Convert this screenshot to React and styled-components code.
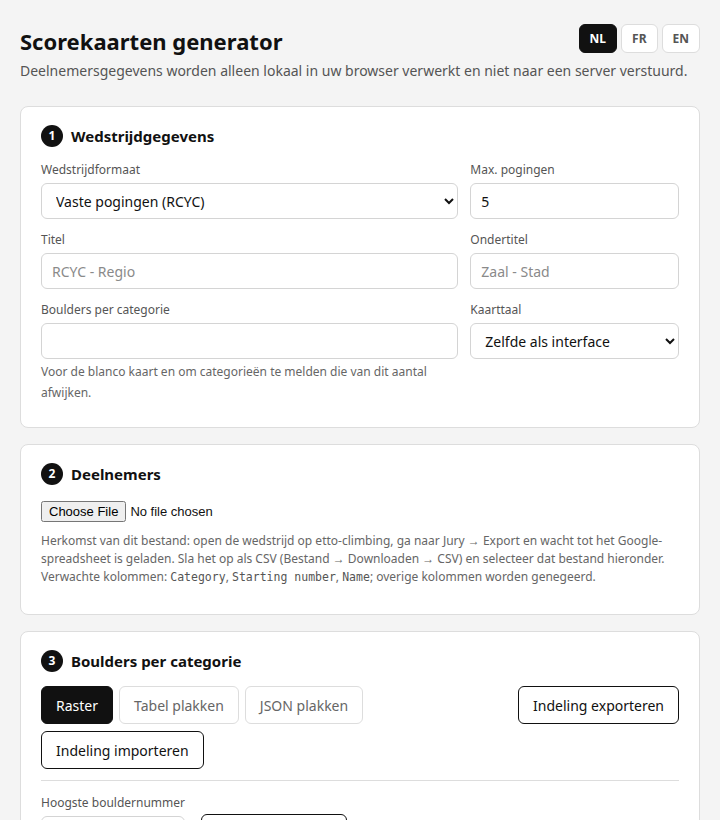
import React, { useState } from "react";
import styled, { createGlobalStyle } from "styled-components";

const GlobalStyle = createGlobalStyle`
  * { box-sizing: border-box; }
  body {
    margin: 0;
    background: #f4f4f4;
    color: #111;
    font-family: "Noto Sans", "Open Sans", sans-serif;
  }
`;

const Page = styled.div`
  padding: 24px 20px 40px;
`;

const Header = styled.header`
  display: flex;
  justify-content: space-between;
  align-items: flex-start;
`;

const Title = styled.h1`
  margin: 0;
  font-size: 22px;
  line-height: 34px;
  font-weight: 700;
`;

const LangGroup = styled.div`
  display: flex;
  gap: 4px;
`;

const LangButton = styled.button`
  font-family: inherit;
  font-size: 12px;
  font-weight: 700;
  height: 29px;
  padding: 0 10px;
  border-radius: 6px;
  border: 1px solid ${(p) => (p.$active ? "#111" : "#ddd")};
  background: ${(p) => (p.$active ? "#111" : "#fff")};
  color: ${(p) => (p.$active ? "#fff" : "#555")};
  cursor: pointer;
`;

const Subtitle = styled.p`
  margin: 2px 0 24px;
  font-size: 14px;
  line-height: 22px;
  color: #555;
`;

const Card = styled.section`
  background: #fff;
  border: 1px solid #ddd;
  border-radius: 8px;
  padding: 18px 20px 24px;
  margin-bottom: 16px;
`;

const CardTitle = styled.h2`
  display: flex;
  align-items: center;
  gap: 8px;
  margin: 0 0 14px;
  font-size: 15px;
  line-height: 22px;
  font-weight: 700;
`;

const Step = styled.span`
  display: inline-flex;
  align-items: center;
  justify-content: center;
  width: 22px;
  height: 22px;
  border-radius: 50%;
  background: #111;
  color: #fff;
  font-size: 12px;
  font-weight: 700;
`;

const FieldGrid = styled.div`
  display: grid;
  grid-template-columns: 2fr 1fr;
  gap: 12px;
`;

const Field = styled.div`
  display: flex;
  flex-direction: column;
  min-width: 0;
`;

const Label = styled.label`
  font-size: 12px;
  line-height: 18px;
  color: #555;
  margin-bottom: 4px;
`;

const inputBase = `
  height: 36px;
  border: 1px solid #d4d4d4;
  border-radius: 6px;
  background: #fff;
  padding: 0 10px;
  font-family: inherit;
  font-size: 14px;
  color: #111;
  width: 100%;
  &::placeholder { color: #8a8a8a; }
`;

const Input = styled.input`
  ${inputBase}
  width: ${(p) => p.$width || "100%"};
`;

const Select = styled.select`
  ${inputBase}
`;

const FieldHint = styled.p`
  margin: 2px 0 0;
  font-size: 12px;
  line-height: 21px;
  color: #666;
`;

const FileInput = styled.input`
  margin: 0;
  font-size: 13px;
`;

const Help = styled.p`
  margin: 10px 0 4px;
  font-size: 12px;
  line-height: 18px;
  color: #666;
`;

const Code = styled.code`
  font-family: "DejaVu Sans Mono", "Liberation Mono", monospace;
  font-size: 11.5px;
  color: #555;
`;

const Toolbar = styled.div`
  display: flex;
  flex-wrap: wrap;
  gap: 7px 6px;
  margin-top: 1px;
`;

const Tab = styled.button`
  height: 38px;
  padding: 0 14px;
  border-radius: 6px;
  font-family: inherit;
  font-size: 14px;
  border: 1px solid ${(p) => (p.$active ? "#111" : "#ddd")};
  background: ${(p) => (p.$active ? "#111" : "#fff")};
  color: ${(p) => (p.$active ? "#fff" : "#666")};
  cursor: pointer;
`;

const ActionButton = styled.button`
  height: 38px;
  padding: 0 14px;
  border-radius: 6px;
  font-family: inherit;
  font-size: 14px;
  border: 1px solid #111;
  background: #fff;
  color: #111;
  cursor: pointer;
  margin-left: ${(p) => (p.$push ? "auto" : "0")};
`;

const Divider = styled.hr`
  border: 0;
  border-top: 1px solid #ddd;
  margin: 11px 0 13px;
`;

const InlineRow = styled.div`
  display: flex;
  align-items: flex-end;
  gap: 16px;
`;

export default function App() {
  const [lang, setLang] = useState("NL");
  const [tab, setTab] = useState("raster");

  return (
    <>
      <GlobalStyle />
      <Page>
        <Header>
          <Title>Scorekaarten generator</Title>
          <LangGroup>
            {["NL", "FR", "EN"].map((l) => (
              <LangButton key={l} $active={lang === l} onClick={() => setLang(l)}>
                {l}
              </LangButton>
            ))}
          </LangGroup>
        </Header>
        <Subtitle>
          Deelnemersgegevens worden alleen lokaal in uw browser verwerkt en niet naar een server verstuurd.
        </Subtitle>

        <Card>
          <CardTitle>
            <Step>1</Step>Wedstrijdgegevens
          </CardTitle>
          <FieldGrid>
            <Field>
              <Label>Wedstrijdformaat</Label>
              <Select defaultValue="rcyc">
                <option value="rcyc">Vaste pogingen (RCYC)</option>
                <option value="open">Open formaat</option>
              </Select>
            </Field>
            <Field>
              <Label>Max. pogingen</Label>
              <Input defaultValue="5" />
            </Field>
            <Field>
              <Label>Titel</Label>
              <Input placeholder="RCYC - Regio" />
            </Field>
            <Field>
              <Label>Ondertitel</Label>
              <Input placeholder="Zaal - Stad" />
            </Field>
            <Field>
              <Label>Boulders per categorie</Label>
              <Input />
              <FieldHint>
                Voor de blanco kaart en om categorieën te melden die van dit aantal afwijken.
              </FieldHint>
            </Field>
            <Field>
              <Label>Kaarttaal</Label>
              <Select defaultValue="same">
                <option value="same">Zelfde als interface</option>
                <option value="nl">Nederlands</option>
                <option value="fr">Français</option>
                <option value="en">English</option>
              </Select>
            </Field>
          </FieldGrid>
        </Card>

        <Card>
          <CardTitle>
            <Step>2</Step>Deelnemers
          </CardTitle>
          <FileInput type="file" accept=".csv" />
          <Help>
            Herkomst van dit bestand: open de wedstrijd op etto-climbing, ga naar Jury → Export en wacht tot het
            Google-spreadsheet is geladen. Sla het op als CSV (Bestand → Downloaden → CSV) en selecteer dat bestand
            hieronder. Verwachte kolommen: <Code>Category</Code>, <Code>Starting number</Code>, <Code>Name</Code>;
            overige kolommen worden genegeerd.
          </Help>
        </Card>

        <Card>
          <CardTitle>
            <Step>3</Step>Boulders per categorie
          </CardTitle>
          <Toolbar>
            <Tab $active={tab === "raster"} onClick={() => setTab("raster")}>Raster</Tab>
            <Tab $active={tab === "table"} onClick={() => setTab("table")}>Tabel plakken</Tab>
            <Tab $active={tab === "json"} onClick={() => setTab("json")}>JSON plakken</Tab>
            <ActionButton $push>Indeling exporteren</ActionButton>
            <ActionButton>Indeling importeren</ActionButton>
          </Toolbar>
          <Divider />
          <InlineRow>
            <Field>
              <Label>Hoogste bouldernummer</Label>
              <Input $width="144px" />
            </Field>
            <ActionButton>Raster opbouwen</ActionButton>
          </InlineRow>
        </Card>
      </Page>
    </>
  );
}
